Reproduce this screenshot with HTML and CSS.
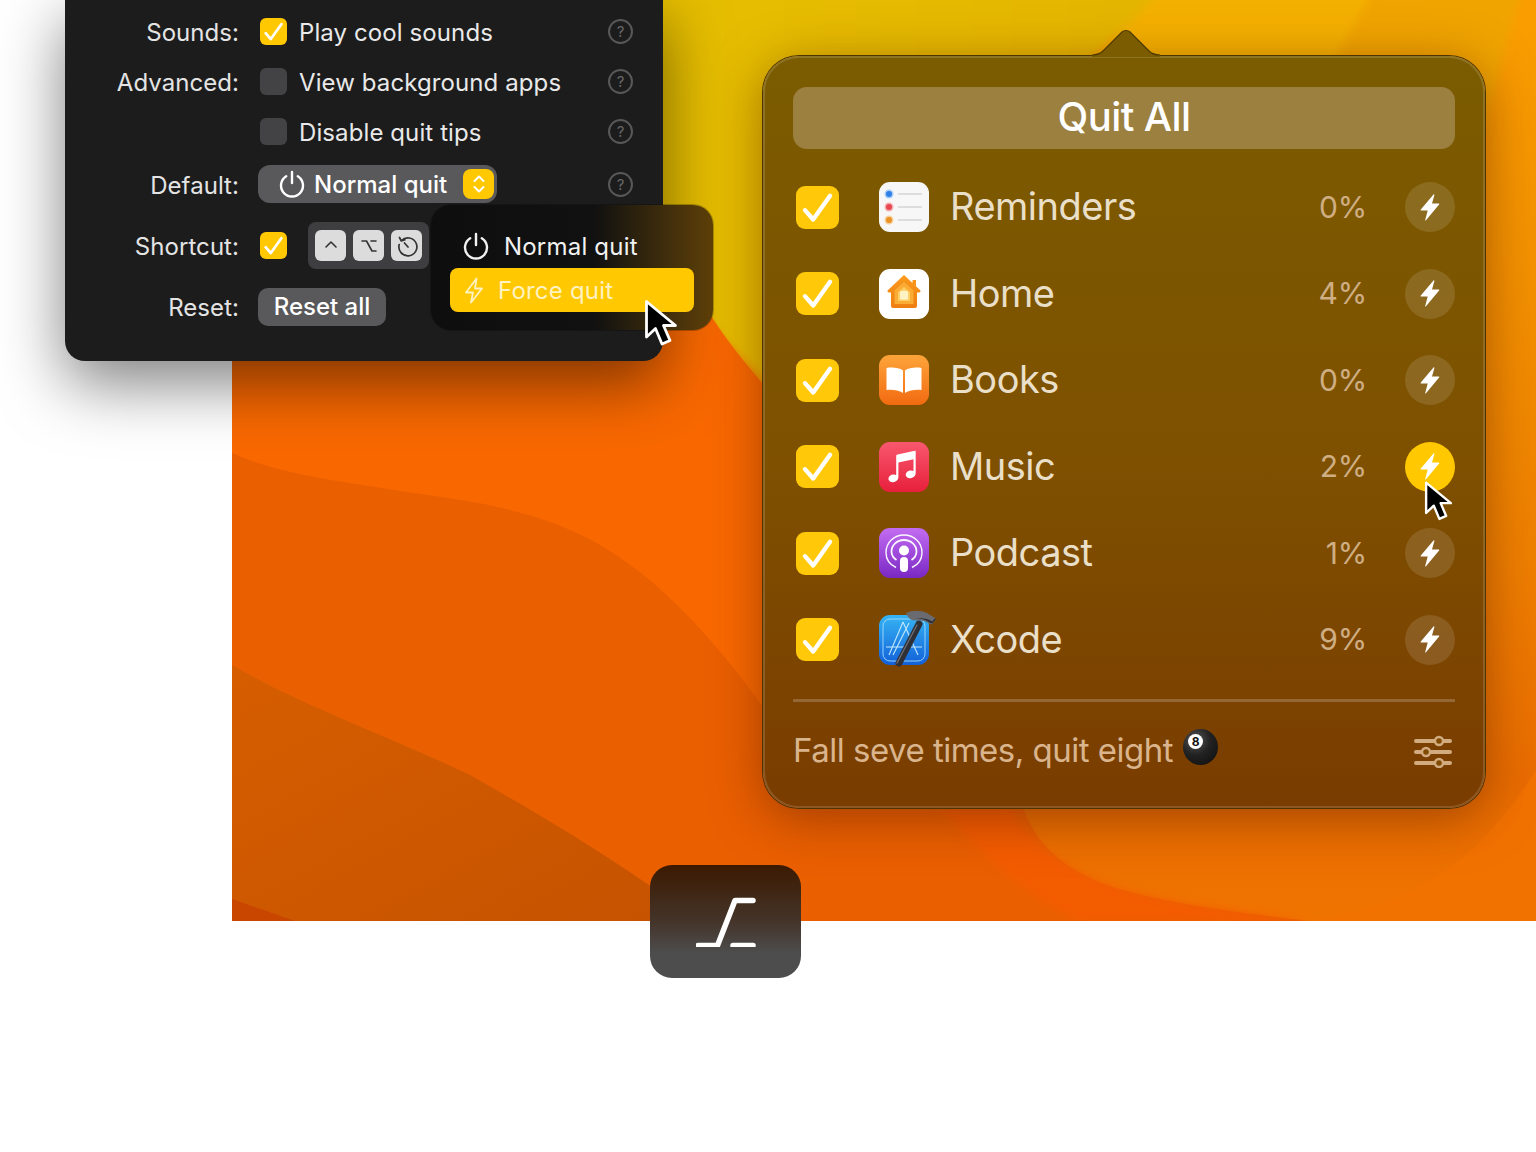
FILE: index.html
```html
<!DOCTYPE html>
<html lang="en">
<head>
    <meta charset="UTF-8">
    <meta name="viewport" content="width=device-width, initial-scale=1.0">
    <title>Quit All</title>
    <link rel="stylesheet" href="styles.css">
</head>
<body>
    <svg class="defs" width="0" height="0">
        <defs>
            <symbol id="check" viewBox="0 0 24 24"><path d="M5 13.500l4.600 5.200L19 5.500" fill="none" stroke="currentColor" stroke-width="2.400" stroke-linecap="round" stroke-linejoin="round"/></symbol>
            <symbol id="bolt" viewBox="0 0 20 27"><path d="M13.500.5L.8 15.600c-.4.500-.1 1 .5 1h6.400L5.200 26c-.1.600.4.800.8.300l13.100-15.800c.4-.5.100-1-.5-1h-6.600L14.400.9c.1-.6-.5-.8-.9-.4z" fill="currentColor"/></symbol>
            <symbol id="power" viewBox="0 0 28 28"><path d="M14 2v11M8.200 6.200a11 11 0 1 0 11.600 0" fill="none" stroke="currentColor" stroke-width="2.400" stroke-linecap="round"/></symbol>
            <symbol id="cursor" viewBox="0 0 34 48"><path d="M2.500 2.500v35.500l9-8.500 6.500 15.500 8-3.500-6.500-15h12z" fill="#000" stroke="#fff" stroke-width="2.800" stroke-linejoin="round"/></symbol>
        </defs>
    </svg>

    <div class="canvas">
        <!-- Fondo -->
        <svg class="wallpaper" viewBox="232 0 1304 921" width="1304" height="921">
            <defs>
                <linearGradient id="wpBase" x1="0" y1="0" x2="0" y2="1">
                    <stop offset="0" stop-color="#fa9e00"/>
                    <stop offset=".3" stop-color="#f39100"/>
                    <stop offset=".6" stop-color="#ef8000"/>
                    <stop offset=".85" stop-color="#e96c00"/>
                    <stop offset="1" stop-color="#f07400"/>
                </linearGradient>
                <linearGradient id="wpYellow" x1="1" y1="0" x2="0" y2="0">
                    <stop offset="0" stop-color="#e4b400"/>
                    <stop offset=".5" stop-color="#e6be00"/>
                    <stop offset="1" stop-color="#e8c400"/>
                </linearGradient>
                <linearGradient id="wpDeep" x1="0" y1="0" x2="1" y2="1">
                    <stop offset="0" stop-color="#d65e00"/>
                    <stop offset="1" stop-color="#c65200"/>
                </linearGradient>
                <filter id="soft" x="-10%" y="-10%" width="120%" height="120%"><feGaussianBlur stdDeviation="4"/></filter>
            </defs>
            <rect x="232" y="0" width="1304" height="921" fill="url(#wpBase)"/>
            <path d="M1300 -40H1530L1480 140H1240z" fill="#f0a400" filter="url(#soft)"/>
            <path d="M1130 -40H1390L1290 140H1100z" fill="#f4b000" filter="url(#soft)"/>
            <path d="M232 -40H1180C1130 60 900 170 780 396L715 330L650 230H232z" fill="url(#wpYellow)" filter="url(#soft)"/>
            <path d="M232 230H660C680 270 700 300 724 335C745 365 770 390 800 430V921H232z" fill="#f96800"/>
            <path d="M232 453C280 475 344 482 467 501C520 510 565 524 600 545C660 580 720 640 800 760H1012C1020 830 1050 860 1094 880C1140 900 1230 912 1311 921H232z" fill="#ea5f00"/>
            <path d="M940 808C985 860 1030 895 1080 921H1311C1230 912 1140 900 1094 880C1050 860 1020 830 1012 808z" fill="#f45c00" filter="url(#soft)"/>
            <path d="M232 665C300 705 393 738 470 775C540 815 600 850 670 900L700 921H232z" fill="url(#wpDeep)"/>
            <path d="M232 899L295 921H232z" fill="#c84600"/>
            <path d="M1300 921C1410 910 1480 860 1536 770V921z" fill="#f27200"/>
        </svg>

        <!-- Ventana de ajustes -->
        <div class="settings">
            <div class="row">
                <div class="row-label">Sounds:</div>
                <div class="row-control"><span class="box box-on"><svg><use href="#check"/></svg></span><span class="box-text">Play cool sounds</span></div>
                <span class="help">?</span>
            </div>
            <div class="row">
                <div class="row-label">Advanced:</div>
                <div class="row-control"><span class="box"></span><span class="box-text">View background apps</span></div>
                <span class="help">?</span>
            </div>
            <div class="row">
                <div class="row-label"></div>
                <div class="row-control"><span class="box"></span><span class="box-text">Disable quit tips</span></div>
                <span class="help">?</span>
            </div>
            <div class="row row-tall">
                <div class="row-label">Default:</div>
                <div class="row-control">
                    <div class="select">
                        <svg class="select-power"><use href="#power"/></svg>
                        <span class="select-text">Normal quit</span>
                        <span class="stepper">
                            <svg viewBox="0 0 14 22" width="14" height="22"><path d="M2.500 8L7 3.500 11.500 8M2.500 14L7 18.500 11.500 14" fill="none" stroke="#fff" stroke-width="2" stroke-linecap="round" stroke-linejoin="round"/></svg>
                        </span>
                    </div>
                </div>
                <span class="help">?</span>
            </div>
            <div class="row row-shortcut">
                <div class="row-label">Shortcut:</div>
                <div class="row-control">
                    <span class="box box-on"><svg><use href="#check"/></svg></span>
                    <div class="keys">
                        <span class="key"><svg viewBox="0 0 16 16" width="16" height="16"><path d="M3 9l5-5 5 5" fill="none" stroke="#333" stroke-width="1.600" stroke-linecap="round" stroke-linejoin="round"/></svg></span>
                        <span class="key"><svg viewBox="0 0 18 18" width="18" height="18"><path d="M2 4h4.500l5.500 10h4M11 4h5" fill="none" stroke="#333" stroke-width="1.600" stroke-linecap="round" stroke-linejoin="round"/></svg></span>
                        <span class="key"><svg viewBox="0 0 24 24" width="24" height="24"><path d="M6.500 6.500a9 9 0 1 1-2.300 4M4.500 3.500l1.800 3.500 3.600-1.200M9.500 9l3.500 4" fill="none" stroke="#333" stroke-width="1.700" stroke-linecap="round" stroke-linejoin="round"/></svg></span>
                    </div>
                </div>
            </div>
            <div class="row row-last">
                <div class="row-label">Reset:</div>
                <div class="row-control"><span class="reset-btn">Reset all</span></div>
            </div>
        </div>

        <!-- Menú desplegable -->
        <div class="menu">
            <div class="menu-item">
                <svg class="menu-power"><use href="#power"/></svg>
                <span>Normal quit</span>
            </div>
            <div class="menu-item menu-item-active">
                <svg class="menu-bolt" viewBox="0 0 20 27"><path d="M12.500 1.500L2 15.500h7L7 25.500l11-14h-7z" fill="none" stroke="currentColor" stroke-width="1.800" stroke-linejoin="round"/></svg>
                <span>Force quit</span>
            </div>
        </div>
        <svg class="cursor cursor-menu"><use href="#cursor"/></svg>

        <!-- Panel Quit All -->
        <div class="panel">
            <svg class="panel-arrow" viewBox="0 0 68 29" width="68" height="29"><path d="M0 27C6 27 9 25 11 23L30 4C32 2 36 2 38 4L57 23C59 25 62 27 68 27V29H0z" fill="#7b5c00"/><path d="M0 27C6 27 9 25 11 23L30 4C32 2 36 2 38 4L57 23C59 25 62 27 68 27" fill="none" stroke="#4e3a00" stroke-width="1.200"/></svg>
            <div class="panel-title">Quit All</div>
            <div class="app-list">
                <div class="app-row">
                    <span class="app-check"><svg><use href="#check"/></svg></span>
                    <svg class="app-icon" viewBox="0 0 50 50">
                        <rect width="50" height="50" rx="11" fill="#f7f7f7"/>
                        <circle cx="10" cy="12" r="4.500" fill="#a9cdf6"/><circle cx="10" cy="12" r="3" fill="#2f7fe6"/>
                        <circle cx="10" cy="25" r="4.500" fill="#f5b0b3"/><circle cx="10" cy="25" r="3" fill="#e8474f"/>
                        <circle cx="10" cy="38" r="4.500" fill="#f8d09c"/><circle cx="10" cy="38" r="3" fill="#ea9226"/>
                        <path d="M19 12h24M19 25h24M19 38h24" stroke="#c4c4c4" stroke-width="1.200"/>
                    </svg>
                    <span class="app-name">Reminders</span>
                    <span class="app-pct">0%</span>
                    <span class="app-quit"><svg><use href="#bolt"/></svg></span>
                </div>
                <div class="app-row">
                    <span class="app-check"><svg><use href="#check"/></svg></span>
                    <svg class="app-icon" viewBox="0 0 50 50">
                        <defs><linearGradient id="homeFill" x1="0" y1="0" x2="0" y2="1"><stop offset="0" stop-color="#fb9a1e"/><stop offset="1" stop-color="#ee7e10"/></linearGradient></defs>
                        <rect width="50" height="50" rx="11" fill="#fff"/>
                        <path d="M25 6L9 21c-1 1-.5 2.500 1 2.500h2V37c0 1 1 2 2 2h22c1 0 2-1 2-2V23.500h2c1.500 0 2-1.500 1-2.500l-4-3.800V11h-3.500v3z" fill="url(#homeFill)"/>
                        <path d="M25 13l-9.500 8.500V35h19V21.500z" fill="#fbac34"/>
                        <path d="M25 18l-6 5.500V32h12v-8.500z" fill="#ffd06a"/>
                        <rect x="21" y="22" width="8" height="8.500" rx="1" fill="#fff2c4"/>
                    </svg>
                    <span class="app-name">Home</span>
                    <span class="app-pct">4%</span>
                    <span class="app-quit"><svg><use href="#bolt"/></svg></span>
                </div>
                <div class="app-row">
                    <span class="app-check"><svg><use href="#check"/></svg></span>
                    <svg class="app-icon" viewBox="0 0 50 50">
                        <defs><linearGradient id="booksFill" x1="0" y1="0" x2="0" y2="1"><stop offset="0" stop-color="#fda53a"/><stop offset="1" stop-color="#f26a10"/></linearGradient></defs>
                        <rect width="50" height="50" rx="11" fill="url(#booksFill)"/>
                        <path d="M24 15.500C20 12.500 13 12 7.500 13v22c6-.5 12 0 16.500 3z" fill="#fff"/>
                        <path d="M26 15.500c4-3 11-3.500 16.500-2.500v22c-6-.5-12 0-16.500 3z" fill="#fff"/>
                    </svg>
                    <span class="app-name">Books</span>
                    <span class="app-pct">0%</span>
                    <span class="app-quit"><svg><use href="#bolt"/></svg></span>
                </div>
                <div class="app-row">
                    <span class="app-check"><svg><use href="#check"/></svg></span>
                    <svg class="app-icon" viewBox="0 0 50 50">
                        <defs><linearGradient id="musicFill" x1="0" y1="0" x2="0" y2="1"><stop offset="0" stop-color="#f8586e"/><stop offset="1" stop-color="#e8203c"/></linearGradient></defs>
                        <rect width="50" height="50" rx="11" fill="url(#musicFill)"/>
                        <path d="M37 8.500L18.500 12.500c-.8.200-1.300.800-1.300 1.700V33c-1-.6-2.300-.8-3.700-.4-2.800.7-4.500 2.800-4 5 .5 2 3 3 5.600 2.400 2.700-.7 4.300-2.500 4.300-4.700V20.500l15.100-3.200V29c-1-.6-2.300-.8-3.700-.4-2.800.7-4.500 2.800-4 5 .5 2 3 3 5.600 2.400 2.700-.7 4.300-2.500 4.300-4.700V10c0-1-.7-1.700-1.700-1.500z" fill="#fff"/>
                    </svg>
                    <span class="app-name">Music</span>
                    <span class="app-pct">2%</span>
                    <span class="app-quit app-quit-hover"><svg><use href="#bolt"/></svg></span>
                </div>
                <div class="app-row">
                    <span class="app-check"><svg><use href="#check"/></svg></span>
                    <svg class="app-icon" viewBox="0 0 50 50">
                        <defs><linearGradient id="podFill" x1="0" y1="0" x2="0" y2="1"><stop offset="0" stop-color="#c36cf2"/><stop offset="1" stop-color="#7a28c4"/></linearGradient></defs>
                        <rect width="50" height="50" rx="11" fill="url(#podFill)"/>
                        <path d="M17 39.500C10.500 36.500 7 30.500 7 24.500 7 14.500 15 7 25 7s18 7.500 18 17.500c0 6-3.500 12-10 15" fill="none" stroke="#fff" stroke-width="1.400" opacity=".95"/>
                        <path d="M17.500 32C14.500 30 12.500 27 12.500 23.500 12.500 17 18 12 25 12s12.500 5 12.500 11.500c0 3.500-2 6.500-5 8.500" fill="none" stroke="#fff" stroke-width="1.800" opacity=".95"/>
                        <circle cx="25" cy="22.500" r="5" fill="#fff"/>
                        <rect x="21" y="29" width="8" height="15" rx="4" fill="#fff"/>
                    </svg>
                    <span class="app-name">Podcast</span>
                    <span class="app-pct">1%</span>
                    <span class="app-quit"><svg><use href="#bolt"/></svg></span>
                </div>
                <div class="app-row">
                    <span class="app-check"><svg><use href="#check"/></svg></span>
                    <svg class="app-icon app-icon-xcode" viewBox="0 0 56 58">
                        <defs><linearGradient id="xcodeFill" x1="0" y1="0" x2="0" y2="1"><stop offset="0" stop-color="#36b4f4"/><stop offset="1" stop-color="#1260d8"/></linearGradient></defs>
                        <rect x="0" y="6" width="50" height="50" rx="11" fill="url(#xcodeFill)"/>
                        <rect x="4" y="10" width="42" height="42" rx="7" fill="none" stroke="#9fdcff" stroke-width=".9"/>
                        <path d="M24 13L10 46M24 13l15 33M7 38h36M30 14L14 46" fill="none" stroke="#bfe8ff" stroke-width="1.100"/>
                        <path d="M40 15L20 54" stroke="#2f3036" stroke-width="7" stroke-linecap="round"/>
                        <path d="M38 16L18 54" stroke="#6c6d74" stroke-width="1.400" stroke-linecap="round"/>
                        <path d="M27 4C33 1 42 1 48 4l8 5 .5 2-3.500 4.500-2.500-.5c-3-3-8-4-13-3.500-4 .300-8-1-10.500-7.500z" fill="#6a6b71"/>
                        <path d="M36 10c5-1 11 0 15 4l2.500.5 3-4-.3-1.500-3 3.500c-5-3-11-4-17.200-2.500z" fill="#2f3036"/>
                    </svg>
                    <span class="app-name">Xcode</span>
                    <span class="app-pct">9%</span>
                    <span class="app-quit"><svg><use href="#bolt"/></svg></span>
                </div>
            </div>
            <div class="panel-divider"></div>
            <div class="panel-footer">
                <span class="footer-text">Fall seve times, quit eight</span>
                <span class="eight-ball"><span class="eight-ball-num">8</span></span>
                <svg class="sliders" viewBox="0 0 38 33" width="38" height="33">
                    <path d="M2 6h34M2 17h34M2 28h34" stroke="#d2ab80" stroke-width="4" stroke-linecap="round"/>
                    <circle cx="25" cy="6" r="4" fill="#7f4a00" stroke="#d2ab80" stroke-width="2.500"/>
                    <circle cx="12" cy="17" r="4" fill="#7f4a00" stroke="#d2ab80" stroke-width="2.500"/>
                    <circle cx="25" cy="28" r="4" fill="#7f4a00" stroke="#d2ab80" stroke-width="2.500"/>
                </svg>
            </div>
        </div>
        <svg class="cursor cursor-panel"><use href="#cursor"/></svg>

        <!-- Icono de la barra de menús -->
        <div class="tile">
            <svg viewBox="0 0 60 50" width="60" height="50"><path d="M2 48.500H21.500L39 3.500H57M37 48.500H57" fill="none" stroke="#fff" stroke-width="5.500" stroke-linecap="round" stroke-linejoin="round"/></svg>
        </div>
    </div>
</body>
</html>
```

FILE: styles.css
```css
body {
    margin: 0;
    background-color: #fff;
    font-family: "Inter", "Liberation Sans", sans-serif;
}
.defs {
    position: absolute;
}
.canvas {
    position: relative; /* lienzo libre: fondo y ventanas */
    width: 1536px;
    height: 1152px;
    overflow: hidden;
}
.wallpaper {
    position: absolute;
    left: 232px;
    top: 0;
    display: block;
}

/* Ventana de ajustes */
.settings {
    position: absolute;
    left: 65px;
    top: 0;
    width: 598px;
    box-sizing: border-box;
    padding: 6px 0 27px;
    background-color: #1c1c1d;
    border-radius: 0 0 20px 20px;
    box-shadow: 0 22px 64px rgba(0, 0, 0, 0.5);
    color: #e9e9e9;
    font-size: 24px;
}
.row {
    display: flex;
    align-items: center;
    height: 50px;
}
.row-tall {
    height: 56px;
}
.row-shortcut {
    height: 67px;
}
.row-last {
    height: 55px;
}
.row-label {
    width: 174px;
    padding-top: 2px;
    text-align: right;
    color: #e4e4e4;
    letter-spacing: 0.05px;
}
.row-control {
    flex: 1;
    display: flex;
    align-items: center;
    margin-left: 19px;
    min-width: 0;
}
.box {
    width: 27px;
    height: 27px;
    margin-left: 2px;
    border-radius: 6px;
    background-color: #434345;
    color: #fff;
    flex: none;
}
.box svg {
    display: block;
    width: 27px;
    height: 27px;
}
.box-on {
    background-color: #ffc800;
}
.box-text {
    margin-left: 12px;
    padding-top: 2px;
    letter-spacing: 0.1px;
}
.help {
    width: 21px;
    height: 21px;
    margin-right: 30px;
    border: 2px solid #585858;
    border-radius: 50%;
    color: #686868;
    font-size: 15px;
    line-height: 21px;
    text-align: center;
}
.select {
    display: flex;
    align-items: center;
    width: 239px;
    height: 38px;
    box-sizing: border-box;
    padding-left: 20px;
    border-radius: 12px;
    background-color: #59595b;
    color: #fff;
    font-weight: 500;
}
.select-power {
    width: 28px;
    height: 28px;
    flex: none;
}
.select-text {
    margin-left: 8px;
}
.stepper {
    display: flex;
    align-items: center;
    justify-content: center;
    width: 31px;
    height: 30px;
    margin-left: auto;
    margin-right: 3px;
    border-radius: 8px;
    background-color: #ffc800;
}
.keys {
    display: flex;
    gap: 7px;
    margin-left: 21px;
    padding: 8px 7px;
    border-radius: 8px;
    background-color: #3e3e40;
}
.key {
    display: flex;
    align-items: center;
    justify-content: center;
    width: 31px;
    height: 31px;
    border-radius: 6px;
    background-color: #dcdcdc;
}
.reset-btn {
    width: 128px;
    height: 38px;
    border-radius: 10px;
    background-color: #59595b;
    color: #fff;
    font-weight: 500;
    line-height: 38px;
    text-align: center;
}

/* Menú desplegable */
.menu {
    position: absolute;
    left: 431px;
    top: 205px;
    width: 282px;
    height: 125px;
    box-sizing: border-box;
    padding: 19px 19px 0;
    border-radius: 20px;
    background: linear-gradient(90deg, #0e0e0e 0%, #111 58%, #5e4008 100%);
    box-shadow: 0 0 0 1px rgba(0, 0, 0, 0.25);
    color: #f2f2f2;
    font-size: 24px;
    letter-spacing: 0.2px;
}
.menu-item {
    display: flex;
    align-items: center;
    height: 44px;
    padding-left: 12px;
}
.menu-item-active {
    padding-left: 14px;
    border-radius: 8px;
    background-color: #ffc800;
    color: #fff2c0;
}
.menu-power {
    width: 28px;
    height: 28px;
    margin-right: 14px;
}
.menu-bolt {
    width: 20px;
    height: 27px;
    margin-right: 14px;
}
.cursor {
    position: absolute;
    overflow: visible;
}
.cursor-menu {
    left: 644px;
    top: 299px;
    width: 34px;
    height: 48px;
}
.cursor-panel {
    left: 1424px;
    top: 479px;
    width: 29px;
    height: 44px;
}

/* Panel Quit All */
.panel {
    position: absolute;
    left: 763px;
    top: 56px;
    width: 722px;
    height: 752px;
    box-sizing: border-box;
    padding: 31px 30px 0;
    border-radius: 36px;
    background: linear-gradient(180deg, #7b5c00 0%, #7e5000 55%, #7a3c00 100%);
    box-shadow: 0 0 0 1px #4e3400, inset 0 0 0 2px rgba(255, 255, 255, 0.14), 0 10px 50px rgba(90, 30, 0, 0.5);
}
.panel-arrow {
    position: absolute;
    left: 329px;
    top: -28px;
}
.panel-title {
    height: 62px;
    border-radius: 14px;
    background-color: #9c8040;
    color: #fff;
    font-size: 40px;
    font-weight: 500;
    line-height: 60px;
    text-align: center;
    letter-spacing: -0.6px;
}
.app-list {
    margin-top: 15px;
}
.app-row {
    display: flex;
    align-items: center;
    height: 86.5px;
}
.app-check {
    width: 43px;
    height: 43px;
    margin-left: 3px;
    border-radius: 9px;
    background-color: #ffc90a;
    color: #fff;
    flex: none;
}
.app-check svg {
    display: block;
    width: 43px;
    height: 43px;
}
.app-icon {
    width: 50px;
    height: 50px;
    margin-left: 40px;
    flex: none;
    overflow: visible;
}
.app-icon-xcode {
    width: 56px;
    height: 58px;
    margin-top: -3px;
    margin-right: -6px;
}
.app-name {
    flex: 1;
    margin-top: -2px;
    margin-left: 21px;
    color: #eadfc8;
    font-size: 38px;
    letter-spacing: -0.5px;
}
.app-pct {
    margin-top: -1px;
    color: #cfae84;
    font-size: 30px;
    letter-spacing: -0.2px;
}
.app-quit {
    display: flex;
    align-items: center;
    justify-content: center;
    width: 50px;
    height: 50px;
    margin-left: 38px;
    border-radius: 50%;
    background-color: rgba(255, 255, 255, 0.12);
    color: #fff;
    flex: none;
}
.app-quit svg {
    width: 20px;
    height: 27px;
}
.app-quit-hover {
    background-color: #ffc800;
}
.panel-divider {
    height: 3px;
    margin-top: 16px;
    background-color: rgba(255, 255, 255, 0.2);
}
.panel-footer {
    display: flex;
    align-items: center;
    height: 98px;
    color: #d9b48c;
    font-size: 33px;
    letter-spacing: -0.5px;
}
.footer-text {
    margin-top: -2px;
}
.eight-ball {
    position: relative;
    top: -4px;
    width: 35px;
    height: 36px;
    margin-left: 10px;
    border-radius: 50%;
    background: radial-gradient(circle at 35% 30%, #555 0%, #222 45%, #0c0c0c 100%);
}
.eight-ball-num {
    position: absolute;
    left: 5px;
    top: 5px;
    width: 15px;
    height: 15px;
    border-radius: 50%;
    background-color: #fff;
    color: #111;
    font-size: 12px;
    font-weight: 700;
    line-height: 15px;
    text-align: center;
    letter-spacing: 0;
}
.sliders {
    margin-left: auto;
    margin-right: 3px;
}

/* Icono de la barra de menús */
.tile {
    position: absolute;
    left: 650px;
    top: 865px;
    display: flex;
    align-items: center;
    justify-content: center;
    width: 151px;
    height: 113px;
    border-radius: 22px;
    background: linear-gradient(180deg, #3c1a00 0%, #44342a 50%, #4d4d4d 78%);
}
```
